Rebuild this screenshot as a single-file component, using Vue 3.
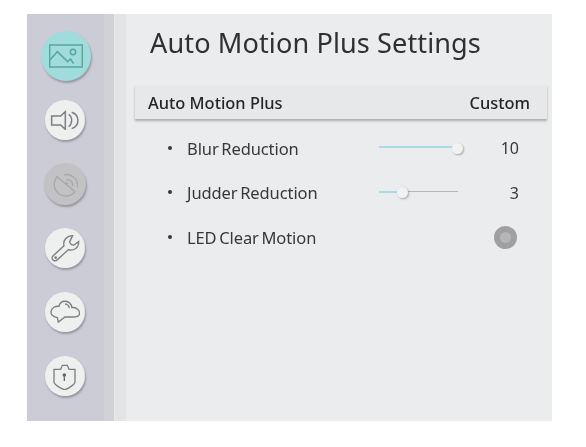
<script setup>
const rows = [
  { label: 'Blur Reduction', value: 10, fill: 94, knob: 100 },
  { label: 'Judder Reduction', value: 3, fill: 24, knob: 30 },
]
</script>

<template>
  <div class="page">
    <div class="panel">
      <nav class="side">
        <div class="circle active">
          <svg width="34" height="26.67" viewBox="148 128 102 80" fill="none" stroke="#5aa5a0" stroke-width="4.5">
            <rect x="150" y="134" width="98" height="66" />
            <path d="M150 180 L173 154 L204 184 L212 176 L222 190" />
            <circle cx="220" cy="155" r="8" />
          </svg>
        </div>
        <div class="circle">
          <svg width="30.67" height="20.67" viewBox="148 330 92 62" fill="none" stroke="#7e7e80" stroke-width="4.5">
            <path d="M153 348 H180 L194 335 V388 L180 375 H153 Z" />
            <path d="M204 343 C216 350 216 372 204 380" />
            <path d="M213 337 C238 345 238 378 213 386" />
          </svg>
        </div>
        <div class="circle disabled">
          <svg width="26.67" height="28.67" viewBox="153 510 80 86" fill="none" stroke="#a8a8aa" stroke-width="4">
            <path d="M168 530 L222 575 C212 590 190 592 175 582 C158 570 155 548 168 530 Z" />
            <path d="M189 525 C210 518 235 540 229 561" />
            <path d="M196 540 C207 536 218 548 214 558" />
            <path d="M192 550 H202 M197 545 V555" stroke-width="3" />
          </svg>
        </div>
        <div class="circle">
          <svg width="30" height="28.33" viewBox="150 45 90 85" fill="none" stroke="#7e7e80" stroke-width="4">
            <path d="M218 50 C200 50 188 65 192 80 L158 112 C153 118 160 129 170 124 L205 92 C220 97 236 88 236 68 L222 78 C216 80 211 76 209 68 Z" />
            <circle cx="167" cy="116" r="2" />
          </svg>
        </div>
        <div class="circle">
          <svg width="30.67" height="23.33" viewBox="150 245 92 70" fill="none" stroke="#7e7e80" stroke-width="4">
            <path d="M177 264 C181 243 211 243 216 268 C230 265 241 278 238 288 C236 296 225 296 218 296 H195 L175 311 L172 298 C160 296 152 288 153 280 C154 270 165 262 177 264 Z" />
            <path d="M195 257 C203 257 208 264 208 270" />
          </svg>
        </div>
        <div class="circle">
          <svg width="23.33" height="28" viewBox="162 428 70 84" fill="none" stroke="#7e7e80" stroke-width="4">
            <path d="M165 450 H185 L190 438 H205 L210 450 H228 V488 C228 495 205 510 197 511 C189 510 165 495 165 488 Z" />
            <circle cx="196" cy="467" r="5.5" fill="#68686b" stroke="none" />
            <path d="M196 467 V485" stroke="#68686b" />
          </svg>
        </div>
      </nav>
      <div class="strip dark"></div>
      <div class="strip light"></div>
      <main class="main">
        <h1 class="title">Auto Motion Plus Settings</h1>
        <div class="bar">
          <span>Auto Motion Plus</span>
          <span>Custom</span>
        </div>
        <div v-for="r in rows" :key="r.label" class="row">
          <span class="dot"></span>
          <span class="label">{{ r.label }}</span>
          <div class="slider">
            <div class="fill" :style="{ width: r.fill + '%' }"></div>
            <div class="knob" :style="{ left: r.knob + '%' }"></div>
          </div>
          <span class="value">{{ r.value }}</span>
        </div>
        <div class="row">
          <span class="dot"></span>
          <span class="label">LED Clear Motion</span>
          <span class="toggle"></span>
        </div>
      </main>
    </div>
  </div>
</template>

<style>
html, body { margin: 0; background: #fff; }
</style>

<style scoped>
.page {
  width: 586px;
  height: 447px;
  padding: 14px 34px 26px 27px;
  box-sizing: border-box;
  font-family: "Noto Sans", "Open Sans", sans-serif;
  overflow: hidden;
}
.panel {
  display: flex;
  height: 407px;
  background: #ebeced;
  filter: blur(0.4px);
}
.side {
  width: 77px;
  flex: none;
  background: #ccccd7;
  display: flex;
  flex-direction: column;
  align-items: center;
  padding-top: 17px;
  box-sizing: border-box;
}
.circle {
  width: 40px;
  height: 40px;
  flex: none;
  margin: 0 0 24px -1px;
  border-radius: 50%;
  background: #eeefef;
  box-shadow: 1px 2px 2px rgba(110, 110, 120, 0.55);
  display: flex;
  align-items: center;
  justify-content: center;
}
.circle.active {
  width: 50px;
  height: 50px;
  margin: 0 0 19px 1px;
  background: #9fdcdb;
}
.circle.disabled {
  width: 42px;
  height: 42px;
  margin-bottom: 23px;
  margin-top: -1px;
  background: #c2c2c5;
}
.strip { flex: none; width: 11px; }
.strip.dark { background: #d1d2d5; border-right: 1px solid #e9e9ea; box-sizing: border-box; }
.strip.light { background: #e3e4e6; }
.main {
  flex: 1;
  min-width: 0;
  padding: 0 5px 0 9px;
}
.title {
  margin: 0;
  padding: 11px 0 0 15px;
  height: 60px;
  box-sizing: border-box;
  font-size: 27.1px;
  line-height: 36px;
  font-weight: 400;
  color: #2f3032;
  letter-spacing: 0.1px;
  white-space: nowrap;
}
.bar {
  height: 34px;
  margin-top: 11px;
  padding: 0 17px 0 13px;
  display: flex;
  align-items: center;
  justify-content: space-between;
  background: #e7e8ea;
  box-shadow: 0 2px 2px rgba(130, 130, 130, 0.6);
  font-size: 16.4px;
  font-weight: 500;
  color: #242527;
  white-space: nowrap;
}
.row {
  height: 44.5px;
  display: flex;
  align-items: center;
  font-size: 16.5px;
  color: #37383a;
  letter-spacing: -0.1px;
  word-spacing: -1.5px;
}
.bar + .row { margin-top: 7px; }
.dot {
  width: 4px;
  height: 4px;
  border-radius: 50%;
  background: #37383a;
  margin: -1px 0 0 33px;
  flex: none;
}
.label {
  margin-left: 15px;
  width: 192px;
  flex: none;
  white-space: nowrap;
}
.slider {
  position: relative;
  width: 79px;
  height: 1px;
  margin-top: -2px;
  background: #b5b6b8;
  flex: none;
}
.fill {
  position: absolute;
  left: 0;
  top: -0.5px;
  height: 2px;
  background: #a5dbe4;
}
.knob {
  position: absolute;
  top: -4px;
  width: 11px;
  height: 11px;
  margin-left: -6px;
  border-radius: 50%;
  background: #f1f2f2;
  box-shadow: 1px 1px 2px rgba(120, 120, 120, 0.6);
}
.value {
  margin-left: auto;
  padding-right: 28px;
  font-size: 16px;
  letter-spacing: 0;
}
.toggle {
  width: 11px;
  height: 11px;
  border: 6px solid #a0a0a2;
  background: #b6b6b8;
  border-radius: 50%;
  margin-left: auto;
  margin-right: 30px;
  flex: none;
}
</style>
